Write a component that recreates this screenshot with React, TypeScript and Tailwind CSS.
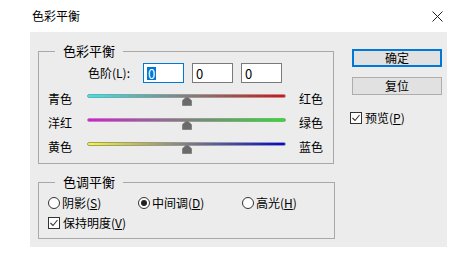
const font = "font-['Noto_Sans_CJK_SC','Noto_Sans',sans-serif]";

function Thumb() {
  return (
    <svg width="10" height="10" viewBox="0 0 10 10" className="absolute top-[9px] left-[95px]">
      <polygon points="0.5,4.5 5,0.5 9.5,4.5 9.5,9.5 0.5,9.5" fill="#6a6a6a" stroke="#858585" strokeWidth="1" />
    </svg>
  );
}

function SliderRow({ left, right, gradient }: { left: string; right: string; gradient: string }) {
  return (
    <div className="flex h-[24px] items-center pl-[9px]">
      <span className="w-[39px] text-[12px] leading-none">{left}</span>
      <div className="relative h-[24px] w-[199px]">
        <div className={`mt-[7px] h-[4px] rounded-full border border-[#9a9a9a] ${gradient}`} />
        <Thumb />
      </div>
      <span className="ml-[13px] text-[12px] leading-none">{right}</span>
    </div>
  );
}

function Radio({ checked, label, k }: { checked?: boolean; label: string; k: string }) {
  return (
    <div className="flex items-center gap-[2px]">
      <span className="flex h-[12px] w-[12px] items-center justify-center rounded-full border border-[#333333] bg-white">
        {checked && <span className="h-[6px] w-[6px] rounded-full bg-[#222222]" />}
      </span>
      <span className="text-[12px] leading-none">
        {label}(<span className="underline">{k}</span>)
      </span>
    </div>
  );
}

function Check({ label, k }: { label: string; k: string }) {
  return (
    <div className="flex items-center gap-[3px]">
      <svg width="12" height="12" viewBox="0 0 12 12">
        <rect x="0.5" y="0.5" width="11" height="11" fill="#fff" stroke="#333333" />
        <path d="M2.5 6 L5 8.5 L9.5 3" fill="none" stroke="#333333" strokeWidth="1.1" />
      </svg>
      <span className="text-[12px] leading-none">
        {label}(<span className="underline">{k}</span>)
      </span>
    </div>
  );
}

function Input({ focused }: { focused?: boolean }) {
  return (
    <div
      className={`flex h-[20px] w-[41px] items-center bg-white pl-[3px] text-[13px] leading-none ${
        focused ? "border border-[#0078d7]" : "border border-[#7a7a7a]"
      }`}
    >
      {focused ? <span className="bg-[#0078d7] px-[1px] text-white">0</span> : <span>0</span>}
    </div>
  );
}

export default function App() {
  return (
    <div className={`h-[262px] w-[472px] bg-white text-black ${font}`}>
      {/* title bar */}
      <div className="flex h-[32px] items-center justify-between pl-[32px] pr-[29px]">
        <span className="text-[12px] leading-none">色彩平衡</span>
        <svg width="11" height="11" viewBox="0 0 11 11">
          <path d="M0.5 0.5 L10.5 10.5 M10.5 0.5 L0.5 10.5" stroke="#222" strokeWidth="1" />
        </svg>
      </div>

      <div className="ml-[30px] flex h-[215px] w-[417px] bg-[#ececec]">
        {/* left column */}
        <div className="w-[306px] pl-[8px] pt-[19px]">
          <div className="relative h-[113px] w-[296px] border border-[#a8a8a8]">
            <span className="absolute -top-[9px] left-[16px] bg-[#ececec] px-[8px] text-[13px] leading-[16px]">
              色彩平衡
            </span>
            <div className="flex items-center pl-[49px] pt-[11px]">
              <span className="w-[55px] text-[12px] leading-none">色阶(L):</span>
              <div className="flex gap-[8px]">
                <Input focused />
                <Input />
                <Input />
              </div>
            </div>
            <div className="mt-[4px]">
              <SliderRow left="青色" right="红色" gradient="bg-[linear-gradient(to_right,#00ffff,#ff0000)]" />
              <SliderRow left="洋红" right="绿色" gradient="bg-[linear-gradient(to_right,#ff00ff,#00ff00)]" />
              <SliderRow left="黄色" right="蓝色" gradient="bg-[linear-gradient(to_right,#ffff00,#0000ff)]" />
            </div>
          </div>

          <div className="relative mt-[18px] h-[57px] w-[297px] border border-[#a8a8a8]">
            <span className="absolute -top-[9px] left-[16px] bg-[#ececec] px-[8px] text-[13px] leading-[16px]">
              色调平衡
            </span>
            <div className="flex pl-[9px] pt-[14px]">
              <div className="w-[90px]">
                <Radio label="阴影" k="S" />
              </div>
              <div className="w-[104px]">
                <Radio checked label="中间调" k="D" />
              </div>
              <Radio label="高光" k="H" />
            </div>
            <div className="pl-[9px] pt-[8px]">
              <Check label="保持明度" k="V" />
            </div>
          </div>
        </div>

        {/* right column */}
        <div className="flex flex-col pl-[16px] pt-[17px]">
          <button className="h-[18px] w-[90px] border-2 border-[#0078d7] bg-[#e1e1e1] text-[12px] leading-none">
            确定
          </button>
          <button className="mt-[10px] h-[18px] w-[90px] border border-[#adadad] bg-[#e1e1e1] text-[12px] leading-none">
            复位
          </button>
          <div className="-ml-[2px] mt-[17px]">
            <Check label="预览" k="P" />
          </div>
        </div>
      </div>
    </div>
  );
}
